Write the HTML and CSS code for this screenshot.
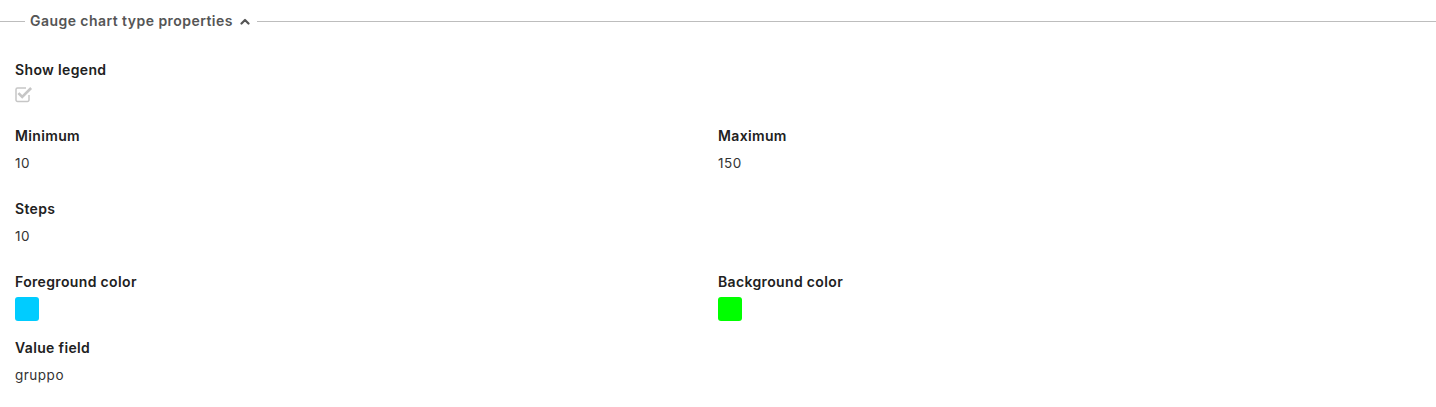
FILE: index.html
```html
<!DOCTYPE html>
<html>
<head>
  <meta charset="UTF-8">
  <title>Gauge chart type properties</title>
  <link rel="stylesheet" href="styles.css">
</head>
<body>
  <fieldset class="props">
    <legend class="props-title">
      Gauge chart type properties
      <svg class="chevron" width="10" height="7" viewBox="0 0 10 7">
        <path d="M1.5 5.5 L5 2 L8.5 5.5" fill="none" stroke="#555" stroke-width="2.2" stroke-linecap="round" stroke-linejoin="round"/>
      </svg>
    </legend>

    <div class="props-grid">
      <div class="field full check-field">
        <div class="field-label">Show legend</div>
        <div class="check-row">
          <svg width="18" height="17" viewBox="0 0 18 17">
            <path d="M14 9 V14 A1.5 1.5 0 0 1 12.5 15.5 H2.5 A1.5 1.5 0 0 1 1 14 V3.5 A1.5 1.5 0 0 1 2.5 2 H11" fill="none" stroke="#c6c6c6" stroke-width="1.5"/>
            <path d="M4.3 8 L7.2 10.9 L15.2 2.9" fill="none" stroke="#c6c6c6" stroke-width="2.6" stroke-linecap="square"/>
          </svg>
        </div>
      </div>

      <div class="field">
        <div class="field-label">Minimum</div>
        <div class="field-value">10</div>
      </div>
      <div class="field">
        <div class="field-label">Maximum</div>
        <div class="field-value">150</div>
      </div>

      <div class="field full">
        <div class="field-label">Steps</div>
        <div class="field-value">10</div>
      </div>

      <div class="field">
        <div class="field-label">Foreground color</div>
        <div class="swatch swatch-fg"></div>
      </div>
      <div class="field">
        <div class="field-label">Background color</div>
        <div class="swatch swatch-bg"></div>
      </div>

      <div class="field full">
        <div class="field-label">Value field</div>
        <div class="field-value">gruppo</div>
      </div>
    </div>
  </fieldset>
</body>
</html>
```

FILE: styles.css
```css
body {
  margin: 0;
  font-family: Inter, "Open Sans", sans-serif;
  background: #fff;
  color: #222;
}
.props {
  margin: 11px 0 0;
  padding: 29px 15px 0;
  border: 0;
  border-top: 1px solid #bdbdbd;
  min-inline-size: 0;
}
.props-title {
  margin-left: 10px;
  padding: 0 7px 0 5px;
  font-size: 14px;
  font-weight: 600;
  line-height: 20px;
  letter-spacing: 0.45px;
  color: #555;
}
.chevron {
  margin-left: 3px;
  vertical-align: 1px;
}
.props-grid {
  display: grid;
  grid-template-columns: 1fr 1fr;
}
.field.full {
  grid-column: 1 / 3;
}
.field {
  margin-bottom: 17px;
}
.check-field {
  margin-bottom: 16px;
}
.field-label {
  font-size: 14px;
  font-weight: 600;
  line-height: 20px;
  letter-spacing: 0.35px;
  margin-bottom: 5px;
  color: #212121;
}
.field-value {
  font-size: 13.5px;
  line-height: 24px;
  letter-spacing: 0.5px;
  padding-bottom: 7px;
  color: #333;
}
.check-row {
  height: 24px;
}
.check-row svg {
  display: block;
  margin: 6px 0 0 0;
}
.swatch {
  width: 24px;
  height: 24px;
  border-radius: 3px;
}
.swatch-fg {
  background: #00ccff;
}
.swatch-bg {
  background: #00ff00;
}
```
